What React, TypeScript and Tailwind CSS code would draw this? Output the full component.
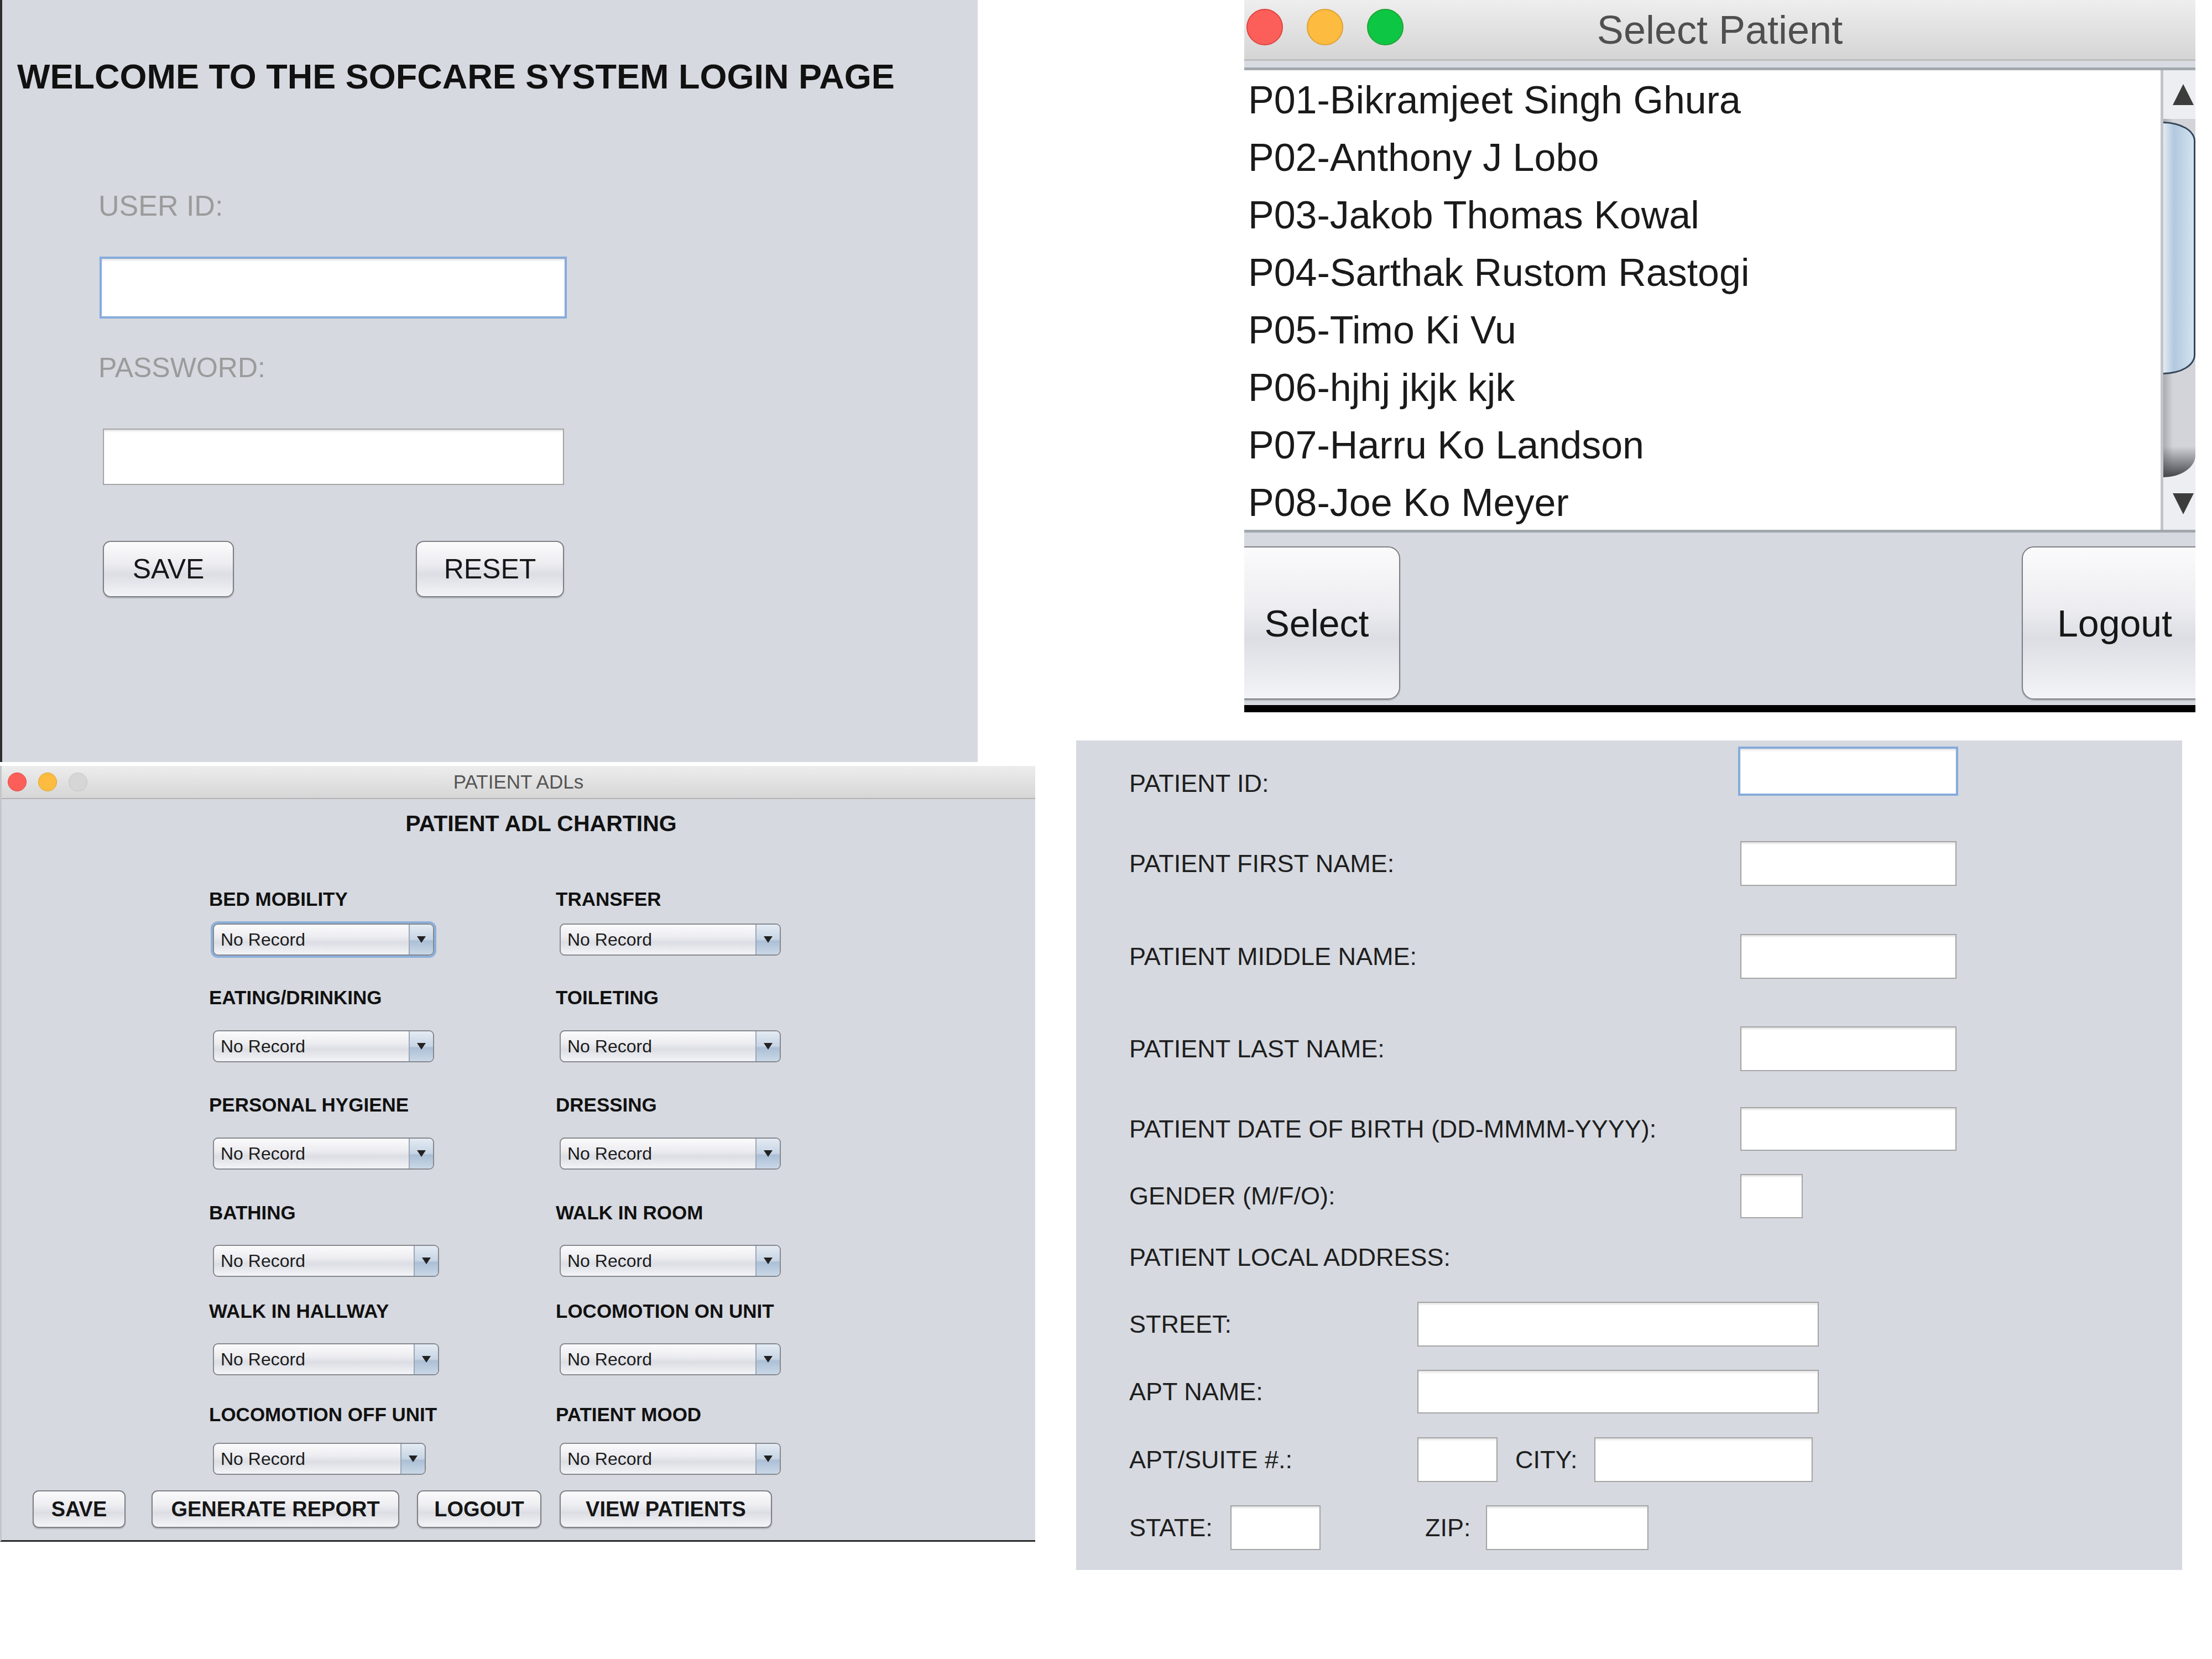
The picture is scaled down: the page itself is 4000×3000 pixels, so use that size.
import React from "react";

const patients = [
  "P01-Bikramjeet Singh Ghura",
  "P02-Anthony J Lobo",
  "P03-Jakob Thomas Kowal",
  "P04-Sarthak Rustom Rastogi",
  "P05-Timo Ki Vu",
  "P06-hjhj jkjk kjk",
  "P07-Harru Ko Landson",
  "P08-Joe Ko Meyer",
];

const adlRows = [
  { left: "BED MOBILITY", right: "TRANSFER", lmt: "mt-[97px]", smt: "mt-[24px]", w: "w-[400px]", focus: true },
  { left: "EATING/DRINKING", right: "TOILETING", lmt: "mt-[56px]", smt: "mt-[39px]", w: "w-[400px]" },
  { left: "PERSONAL HYGIENE", right: "DRESSING", lmt: "mt-[57px]", smt: "mt-[39px]", w: "w-[400px]" },
  { left: "BATHING", right: "WALK IN ROOM", lmt: "mt-[58px]", smt: "mt-[38px]", w: "w-[409px]" },
  { left: "WALK IN HALLWAY", right: "LOCOMOTION ON UNIT", lmt: "mt-[42px]", smt: "mt-[38px]", w: "w-[409px]" },
  { left: "LOCOMOTION OFF UNIT", right: "PATIENT MOOD", lmt: "mt-[51px]", smt: "mt-[31px]", w: "w-[385px]" },
];

const aqua =
  "bg-[linear-gradient(to_bottom,#fbfbfc_0%,#ededf1_40%,#dcdee4_60%,#f3f4f7_100%)]";

interface BoxProps {
  className?: string;
  focus?: boolean;
  children?: React.ReactNode;
}

const AquaButton = ({ className = "", children }: BoxProps) => {
  return (
    <div
      className={`flex items-center justify-center border-2 border-[#7d7f85] text-[#161616] shadow-[0_2px_2px_rgba(0,0,0,0.18)] ${aqua} ${className}`}
    >
      {children}
    </div>
  );
};

const Field = ({ className = "", focus = false }: BoxProps) => {
  return (
    <div
      className={`bg-white shadow-[inset_0_3px_3px_rgba(0,0,0,0.10)] ${
        focus ? "border-[4px] border-[#86abdb]" : "border-2 border-[#a5a5a5]"
      } ${className}`}
    />
  );
};

const Combo = ({ className = "", focus = false }: BoxProps) => {
  return (
    <div
      className={`flex h-[58px] overflow-hidden rounded-[9px] border-2 border-[#85888e] ${aqua} ${
        focus ? "ring-[4px] ring-[#8db0db]" : ""
      } ${className}`}
    >
      <span className="flex flex-1 items-center pl-[12px] text-[32px] text-[#1b1b1b]">No Record</span>
      <span className="flex w-[44px] items-center justify-center border-l-2 border-[#9aa7b8] bg-[linear-gradient(to_bottom,#e4ebf3,#c6d4e4_50%,#abbfd5_55%,#cad8e7)]">
        <span className="h-0 w-0 border-x-[8px] border-t-[12px] border-x-transparent border-t-[#222]" />
      </span>
    </div>
  );
};

const LoginPanel = () => {
  return (
    <div className="flex h-[1378px] w-[1768px] flex-col border-l-[4px] border-[#2e2e2e] bg-[#d6d9e0]">
      <h1 className="ml-[27px] mt-[100px] h-[76px] whitespace-nowrap text-[63px] font-bold leading-[76px] text-[#111]">
        WELCOME TO THE SOFCARE SYSTEM LOGIN PAGE
      </h1>
      <div className="ml-[174px] mt-[166px] h-[60px] text-[52px] leading-[60px] text-[#9b9b9b]">USER ID:</div>
      <Field focus className="ml-[176px] mt-[62px] h-[112px] w-[845px]" />
      <div className="ml-[174px] mt-[59px] h-[60px] text-[50px] leading-[60px] text-[#9b9b9b]">PASSWORD:</div>
      <Field className="ml-[182px] mt-[80px] h-[102px] w-[834px]" />
      <div className="ml-[182px] mt-[101px] flex h-[102px] gap-[329px]">
        <AquaButton className="w-[237px] rounded-[14px] text-[50px]">SAVE</AquaButton>
        <AquaButton className="w-[268px] rounded-[14px] text-[50px]">RESET</AquaButton>
      </div>
    </div>
  );
};

const Scrollbar = () => {
  return (
    <div className="flex w-[63px] flex-col border-l-[5px] border-[#c2c4c9] bg-[#eceef1]">
      <div className="flex h-[88px] items-center pl-[17px]">
        <span className="h-0 w-0 border-x-[19px] border-b-[38px] border-x-transparent border-b-[#3c3c3c]" />
      </div>
      <div className="flex h-[648px] flex-col rounded-br-[58px_40px] bg-[linear-gradient(to_right,#a9abb0,#d3d4d9_30%,#d3d4d9)]">
        <div className="mt-[5px] h-[457px] rounded-r-[58px_35px] border-y-[3px] border-r-[3px] border-[#34465a] bg-[linear-gradient(to_right,#e4ebf2,#b2c8de_35%,#d3e3f1)]" />
        <div className="flex-1 rounded-br-[58px_40px] bg-[linear-gradient(to_bottom,transparent_70%,#44454a)]" />
      </div>
      <div className="flex flex-1 items-center pl-[17px]">
        <span className="h-0 w-0 border-x-[19px] border-t-[38px] border-x-transparent border-t-[#3c3c3c]" />
      </div>
    </div>
  );
};

const SelectPatientPanel = () => {
  return (
    <div className="ml-[304px] flex h-[1288px] w-[1720px] flex-col overflow-hidden">
      <div className="grid h-[110px] grid-cols-[1fr_auto_1fr] border-b-[3px] border-[#bdbdbd] bg-linear-to-b from-[#eeeeee] to-[#d5d5d5]">
        <div className="flex gap-[43px] pl-[4px] pt-[16px]">
          <span className="h-[66px] w-[66px] rounded-full border-2 border-[#e0453f] bg-[#fc5f5a]" />
          <span className="h-[66px] w-[66px] rounded-full border-2 border-[#e0a133] bg-[#fdbb3f]" />
          <span className="h-[66px] w-[66px] rounded-full border-2 border-[#1fa332] bg-[#0dc744]" />
        </div>
        <div className="pt-[12px] text-[72px] leading-[84px] text-[#4f4f4f]">Select Patient</div>
        <div />
      </div>
      <div className="h-[12px] bg-[#d8dbe2]" />
      <div className="h-[5px] bg-[#a2a6ad]" />
      <div className="flex h-[831px]">
        <div className="flex-1 bg-white pt-[2px]">
          {patients.map((p) => (
            <div key={p} className="h-[104px] whitespace-nowrap pl-[7px] text-[70px] leading-[104px] text-[#1a1a1a]">
              {p}
            </div>
          ))}
        </div>
        <Scrollbar />
      </div>
      <div className="h-[5px] bg-[#a2a6ad]" />
      <div className="flex h-[312px] justify-between bg-[#d6d9e0] pt-[25px]">
        <AquaButton className="-ml-[20px] h-[277px] w-[302px] rounded-[22px] text-[68px]">Select</AquaButton>
        <AquaButton className="-mr-[22px] h-[277px] w-[336px] rounded-[22px] text-[68px]">Logout</AquaButton>
      </div>
      <div className="h-[13px] bg-black" />
    </div>
  );
};

const AdlPanel = () => {
  return (
    <div className="mt-[7px] flex h-[1403px] w-[1872px] flex-col border-b-[3px] border-l-[3px] border-b-[#2a2a2a] border-l-[#c4c6cc] bg-[#d6d9e0]">
      <div className="grid h-[60px] grid-cols-[1fr_auto_1fr] border-b-2 border-[#b3b3b3] bg-linear-to-b from-[#ededed] to-[#d6d6d6]">
        <div className="flex items-center gap-[21px] pl-[11px]">
          <span className="h-[34px] w-[34px] rounded-full border border-[#e0453f] bg-[#fc5f5a]" />
          <span className="h-[34px] w-[34px] rounded-full border border-[#e0a133] bg-[#fdbb3f]" />
          <span className="h-[34px] w-[34px] rounded-full border border-[#c4c4c4] bg-[#d6d6d6]" />
        </div>
        <div className="self-center text-[35px] leading-[40px] text-[#555]">PATIENT ADLs</div>
        <div />
      </div>
      <div className="mt-[24px] h-[40px] pl-[82px] text-center text-[41px] font-bold leading-[40px] text-[#111]">
        PATIENT ADL CHARTING
      </div>
      {adlRows.map((r) => (
        <div key={r.left} className="pl-[375px]">
          <div className={`grid h-[40px] grid-cols-[627px_auto] text-[35px] font-bold leading-[40px] text-[#111] ${r.lmt}`}>
            <span>{r.left}</span>
            <span>{r.right}</span>
          </div>
          <div className={`grid grid-cols-[627px_auto] ${r.smt}`}>
            <Combo focus={r.focus} className={`ml-[7px] ${r.w}`} />
            <Combo className="ml-[7px] w-[400px]" />
          </div>
        </div>
      ))}
      <div className="mt-[28px] flex h-[68px] pl-[56px] text-[38px] font-bold">
        <AquaButton className="w-[168px] rounded-[11px]">SAVE</AquaButton>
        <AquaButton className="ml-[47px] w-[448px] rounded-[11px]">GENERATE REPORT</AquaButton>
        <AquaButton className="ml-[32px] w-[225px] rounded-[11px]">LOGOUT</AquaButton>
        <AquaButton className="ml-[33px] w-[384px] rounded-[11px]">VIEW PATIENTS</AquaButton>
      </div>
    </div>
  );
};

const PatientFormPanel = () => {
  return (
    <div className="mt-[51px] flex h-[1500px] w-[2000px] flex-col bg-[#d6d9e0] pl-[96px] text-[45px] text-[#1e1e1e]">
      <div className="mt-[11px] flex h-[89px]">
        <span className="mt-[41px] w-[1101px] leading-[52px]">PATIENT ID:</span>
        <Field focus className="h-[89px] w-[398px]" />
      </div>
      <div className="mt-[82px] flex h-[81px] items-center">
        <span className="w-[1105px]">PATIENT FIRST NAME:</span>
        <Field className="h-full w-[391px]" />
      </div>
      <div className="mt-[87px] flex h-[81px] items-center">
        <span className="w-[1105px]">PATIENT MIDDLE NAME:</span>
        <Field className="h-full w-[391px]" />
      </div>
      <div className="mt-[86px] flex h-[81px] items-center">
        <span className="w-[1105px]">PATIENT LAST NAME:</span>
        <Field className="h-full w-[391px]" />
      </div>
      <div className="mt-[65px] flex h-[79px] items-center">
        <span className="w-[1105px]">PATIENT DATE OF BIRTH (DD-MMMM-YYYY):</span>
        <Field className="h-full w-[391px]" />
      </div>
      <div className="mt-[42px] flex h-[80px] items-center">
        <span className="w-[1105px]">GENDER (M/F/O):</span>
        <Field className="h-full w-[113px]" />
      </div>
      <div className="mt-[31px] flex h-[80px] items-center">
        <span>PATIENT LOCAL ADDRESS:</span>
      </div>
      <div className="mt-[40px] flex h-[81px] items-center">
        <span className="w-[521px]">STREET:</span>
        <Field className="h-full w-[726px]" />
      </div>
      <div className="mt-[42px] flex h-[79px] items-center">
        <span className="w-[521px]">APT NAME:</span>
        <Field className="h-full w-[726px]" />
      </div>
      <div className="mt-[43px] flex h-[81px] items-center">
        <span className="w-[521px]">APT/SUITE #.:</span>
        <Field className="h-full w-[145px]" />
        <span className="ml-[32px] w-[143px]">CITY:</span>
        <Field className="h-full w-[395px]" />
      </div>
      <div className="mt-[42px] flex h-[81px] items-center">
        <span className="w-[183px]">STATE:</span>
        <Field className="h-full w-[163px]" />
        <span className="ml-[189px] w-[110px]">ZIP:</span>
        <Field className="h-full w-[294px]" />
      </div>
    </div>
  );
};

const App = () => {
  return (
    <div className="flex h-[3000px] w-[4000px] overflow-hidden bg-white font-['Liberation_Sans',Arial,sans-serif]">
      <div className="flex w-[1872px] flex-col">
        <LoginPanel />
        <AdlPanel />
      </div>
      <div className="ml-[74px] flex flex-1 flex-col">
        <SelectPatientPanel />
        <PatientFormPanel />
      </div>
    </div>
  );
};

export default App;
